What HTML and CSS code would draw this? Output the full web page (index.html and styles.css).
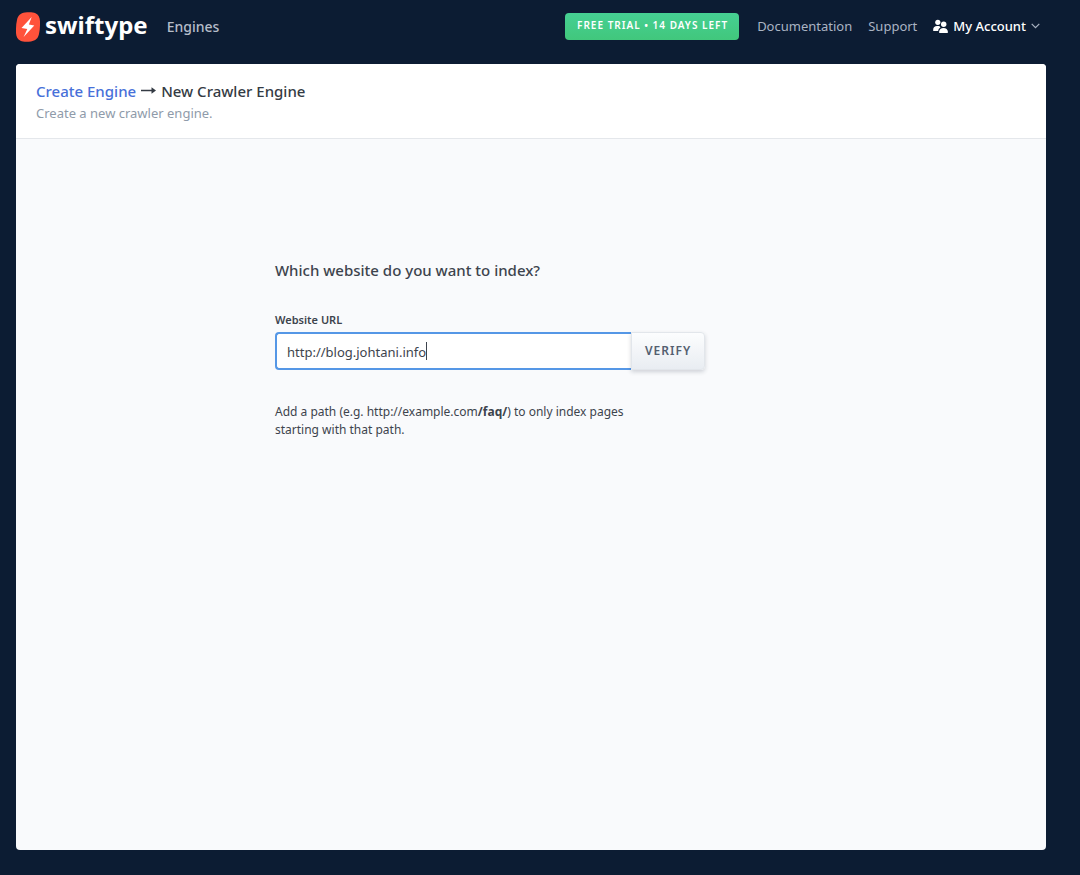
FILE: index.html
```
<!DOCTYPE html>
<html lang="en">
<head>
<meta charset="utf-8">
<meta name="viewport" content="width=device-width, initial-scale=1">
<title>New Crawler Engine - Swiftype</title>
<link rel="stylesheet" href="styles.css">
</head>
<body>
<header class="topbar">
  <a class="logo" href="#">
    <svg class="logo-mark" viewBox="0 0 24 30" aria-hidden="true">
      <path fill="#ff523b" d="M9 .6C12 .1 17 0 19.500 1.300C22.500 2.600 23.800 5.500 24 9C24.100 13 24 18 23 22C22 26.500 19.500 28.700 15 29.400C11 30 7 30 4.500 28.700C1.500 27.300.2 24.500 0 21C-.1 17 0 12 1 8C2 3.500 4.500 1.300 9 .6Z"/>
      <path fill="#fff" d="M15.700 5L5.500 15.900L11.300 17.100L7.600 25L18.300 13.600L12.900 12.400Z"/>
    </svg>
    <span class="logo-name">swiftype</span>
  </a>
  <nav class="nav-main"><a class="nav-engines" href="#">Engines</a></nav>
  <nav class="nav-side">
    <a class="trial" href="#">FREE TRIAL • 14 DAYS LEFT</a>
    <a class="nav-link" href="#">Documentation</a>
    <a class="nav-link" href="#">Support</a>
    <button class="account" type="button">
      <svg class="icon-people" viewBox="0 0 15 15" aria-hidden="true">
        <g fill="#fff">
          <circle cx="4.800" cy="3.300" r="2.600"/>
          <path d="M.2 12V10.500C.2 8.200 1.800 6.900 4 6.900H6.300C6.700 7.600 7 8 7.500 8.400C5.900 9.200 5.300 10.500 5.200 12Z"/>
          <circle cx="10.700" cy="5.200" r="2.700"/>
          <path d="M6.200 14V12.600C6.200 10.400 7.900 8.900 10.500 8.900S14.800 10.400 14.800 12.600V14Z"/>
        </g>
      </svg>
      <span>My Account</span>
      <svg class="icon-chevron" viewBox="0 0 9 6" aria-hidden="true"><path d="M.7.8L4.500 4.600L8.300.8" fill="none" stroke="#aab4c3" stroke-width="1.200"/></svg>
    </button>
  </nav>
</header>
<main class="panel">
  <div class="panel-head">
    <h1 class="crumbs">
      <a class="crumb-link" href="#">Create Engine</a>
      <svg class="icon-arrow" viewBox="0 0 15 10" aria-hidden="true"><path d="M0 4.500H12" stroke="#343b44" stroke-width="1.400"/><path d="M10.500 1.300L15 4.500L10.500 7.700Z" fill="#343b44"/></svg>
      <span>New Crawler Engine</span>
    </h1>
    <p class="subtitle">Create a new crawler engine.</p>
  </div>
  <form class="site-form">
    <h2 class="question">Which website do you want to index?</h2>
    <label class="label" for="site-url">Website URL</label>
    <div class="field">
      <input class="url" id="site-url" type="text" value="http://blog.johtani.info" autofocus>
      <span class="caret" aria-hidden="true"></span>
      <button class="verify" type="button">VERIFY</button>
    </div>
    <p class="hint">Add a path (e.g. http://example.com<strong>/faq/</strong>) to only index pages starting with that path.</p>
  </form>
</main>
</body>
</html>
```
FILE: styles.css
```
* { box-sizing: border-box; }

body {
  margin: 0;
  min-height: 100vh;
  padding: 0 34px 25px 16px;
  display: flex;
  flex-direction: column;
  background: #0c1c33;
  color: #3d444d;
  font-family: "Noto Sans", "Open Sans", sans-serif;
  font-size: 13px;
}

a { text-decoration: none; }
h1, h2, p { margin: 0; }
button, input { font-family: inherit; }

.topbar {
  display: flex;
  align-items: center;
  height: 64px;
  padding: 0 6px 12px 0;
}

.logo { display: flex; align-items: center; gap: 5px; padding-top: 2px; color: #fff; }
.logo-mark { width: 24px; height: 30px; }
.logo-name { font-size: 24px; font-weight: 700; line-height: 30px; margin-top: -4px; }
.nav-main { margin-left: 19px; }
.nav-engines { color: #b6bdc9; font-size: 14px; font-weight: 500; }

.nav-side { display: flex; align-items: center; margin-left: auto; gap: 16px; }
.trial {
  margin-right: 2px;
  padding: 0 11px 2px 12px;
  border-radius: 4px;
  background: linear-gradient(#46d093, #41c77c);
  color: #fff;
  font-size: 10px;
  font-weight: 600;
  letter-spacing: 1px;
  line-height: 25px;
}
.nav-link { color: #aab4c3; }
.account {
  display: flex;
  align-items: center;
  gap: 5px;
  padding: 0;
  border: 0;
  background: none;
  color: #fff;
  font-size: 13px;
  font-weight: 500;
}
.icon-people { width: 15px; height: 15px; }
.icon-chevron { width: 9px; height: 6px; }

.panel {
  flex: 1;
  border-radius: 4px;
  background: #f9fafc;
  overflow: hidden;
}
.panel-head {
  padding: 16px 20px 15px;
  border-bottom: 1px solid #e4e7eb;
  background: #fff;
}
.crumbs {
  display: flex;
  align-items: center;
  gap: 5px;
  color: #343b44;
  font-size: 15px;
  font-weight: 500;
  line-height: 22px;
}
.crumb-link { color: #4770d9; }
.icon-arrow { width: 15px; height: 10px; }
.subtitle { margin-top: 1px; color: #8f9baa; line-height: 20px; }

.site-form { max-width: 512px; margin: 0 auto; padding-top: 119px; }
.question { font-size: 15px; font-weight: 500; line-height: 24px; }
.label {
  display: block;
  margin-top: 30px;
  font-size: 11px;
  font-weight: 600;
  line-height: 16px;
}
.field { display: flex; position: relative; margin-top: 4px; }
.url {
  width: 356px;
  height: 38px;
  padding: 2px 10px 0;
  border: 2px solid #5597e6;
  border-right: 0;
  border-radius: 4px 0 0 4px;
  outline: none;
  background: #fff;
  color: #3d444d;
  caret-color: transparent;
  font-size: 13px;
}
.caret {
  position: absolute;
  top: 10px;
  left: 151px;
  width: 1px;
  height: 18px;
  background: #3d444d;
}
.verify {
  height: 38px;
  padding: 0 13px 2px;
  border: 1px solid #e2e6eb;
  border-radius: 0 4px 4px 0;
  background: linear-gradient(#fcfdfe, #e9edf2);
  box-shadow: 0 2px 4px rgba(40, 50, 70, 0.2);
  color: #535f70;
  font-size: 12px;
  font-weight: 600;
  letter-spacing: 1px;
}
.hint { max-width: 365px; margin-top: 33px; font-size: 12px; line-height: 18px; }
```
